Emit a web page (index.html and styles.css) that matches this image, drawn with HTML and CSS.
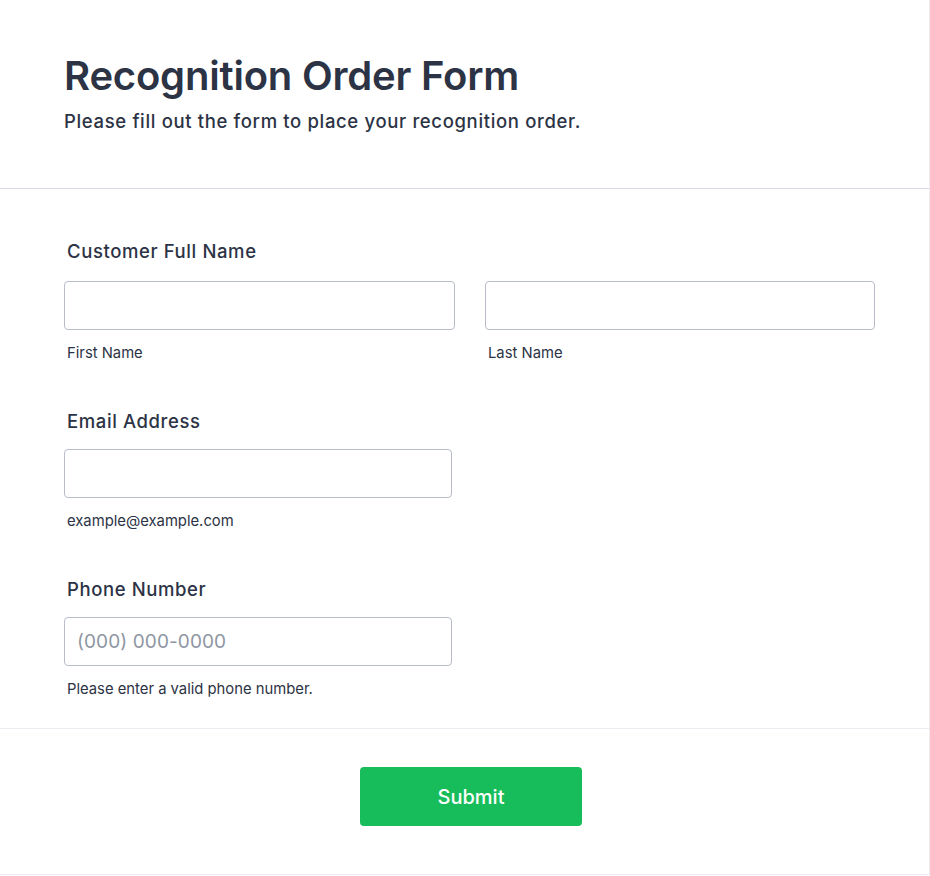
FILE: index.html
```html
<!DOCTYPE html>
<html lang="en">
<head>
<meta charset="utf-8">
<title>Recognition Order Form</title>
<link rel="stylesheet" href="styles.css">
</head>
<body>
<div class="card">
  <header class="head">
    <h1 class="title">Recognition Order Form</h1>
    <p class="subtitle">Please fill out the form to place your recognition order.</p>
  </header>
  <section class="body">
    <div class="field">
      <label class="label">Customer Full Name</label>
      <div class="row">
        <div class="sub">
          <input class="input" type="text">
          <span class="sublabel">First Name</span>
        </div>
        <div class="sub">
          <input class="input" type="text">
          <span class="sublabel">Last Name</span>
        </div>
      </div>
    </div>
    <div class="field">
      <label class="label">Email Address</label>
      <div class="sub half">
        <input class="input" type="email">
        <span class="sublabel">example@example.com</span>
      </div>
    </div>
    <div class="field">
      <label class="label">Phone Number</label>
      <div class="sub half">
        <input class="input" type="tel" placeholder="(000) 000-0000">
        <span class="sublabel">Please enter a valid phone number.</span>
      </div>
    </div>
  </section>
  <footer class="foot">
    <button class="submit" type="button">Submit</button>
  </footer>
</div>
</body>
</html>
```

FILE: styles.css
```css
* { box-sizing: border-box; }
html, body { margin: 0; padding: 0; background: #ffffff; }
body {
  font-family: Inter, "Noto Sans", "Liberation Sans", sans-serif;
  color: #2c3345;
}
.card {
  width: 930px;
  background: #ffffff;
  border-right: 1px solid #ececf2;
  border-bottom: 1px solid #ececf2;
}
.head {
  padding: 52px 64px 55px;
  border-bottom: 1px solid #d8dae9;
}
.title {
  margin: 0;
  font-size: 40px;
  line-height: 48px;
  font-weight: 600;
  letter-spacing: -0.2px;
  color: #2c3345;
}
.subtitle {
  margin: 9px 0 0;
  font-size: 18.5px;
  line-height: 24px;
  font-weight: 500;
  letter-spacing: 0.65px;
  color: #2c3345;
}
.body {
  padding: 50px 54px 30px 64px;
  border-bottom: 1px solid #ebecf2;
  display: flex;
  flex-direction: column;
  gap: 47px;
}
.field { display: flex; flex-direction: column; }
.label {
  display: block;
  padding-left: 3px;
  font-size: 18.5px;
  line-height: 24px;
  font-weight: 500;
  letter-spacing: 0.6px;
  margin-bottom: 16px;
}
.field:first-child .label { margin-bottom: 18px; }
.row {
  display: grid;
  grid-template-columns: 391px 390px;
  column-gap: 30px;
}
.sub { display: flex; flex-direction: column; }
.half { width: 388px; }
.input {
  width: 100%;
  height: 49px;
  border: 1px solid #b8bdc9;
  border-radius: 4px;
  padding: 0 12px;
  font-family: inherit;
  font-size: 19px;
  letter-spacing: 0.1px;
  color: #2c3345;
  background: #ffffff;
  outline: none;
}
.input::placeholder { color: #8f96a3; font-weight: 400; }
.sublabel {
  margin-top: 14px;
  padding-left: 3px;
  font-size: 14.8px;
  line-height: 18px;
  color: #2c3345;
}
.foot {
  padding: 38px 53px 48px 66px;
  display: flex;
  justify-content: center;
}
.submit {
  width: 222px;
  height: 59px;
  border: none;
  border-radius: 4px;
  background: #18bd5b;
  color: #ffffff;
  font-family: inherit;
  font-size: 20px;
  font-weight: 500;
  cursor: pointer;
}
```
